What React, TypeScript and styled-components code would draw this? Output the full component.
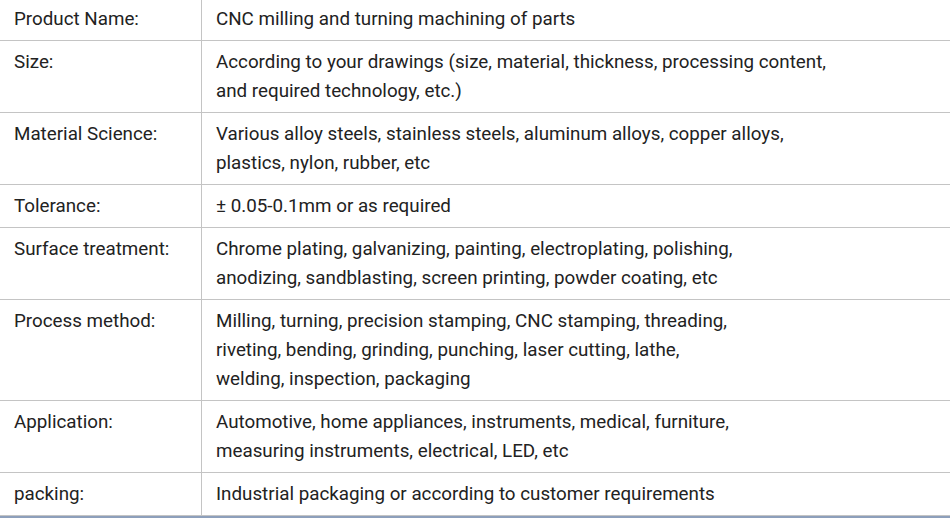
import React from 'react';
import styled, { createGlobalStyle } from 'styled-components';

const GlobalStyle = createGlobalStyle`
  html, body {
    margin: 0;
    padding: 0;
    background: #fff;
    overflow: hidden;
  }
`;

const Frame = styled.div`
  width: 950px;
  height: 518px;
  overflow: hidden;
  background: #8d9fbb;
`;

const Table = styled.table`
  border-collapse: collapse;
  width: 990px;
  margin-top: -3px;
  table-layout: fixed;
  background: #fff;
  font-family: Roboto, "Liberation Sans", Arial, sans-serif;
  font-size: 18.8px;
  line-height: 29px;
  color: #222;
`;

const Row = styled.tr`
  border-top: 1px solid #c4c4c4;
  border-bottom: 1px solid #c4c4c4;
`;

const Cell = styled.td<{ $label?: boolean }>`
  width: ${({ $label }) => ($label ? '173px' : 'auto')};
  padding: 7px 14px 6px 14px;
  vertical-align: top;
  white-space: nowrap;
  border-left: ${({ $label }) => ($label ? 'none' : '1px solid #c4c4c4')};
`;

const rows: { label: string; lines: string[] }[] = [
  { label: 'Product Name:', lines: ['CNC milling and turning machining of parts'] },
  {
    label: 'Size:',
    lines: [
      'According to your drawings (size, material, thickness, processing content,',
      'and required technology, etc.)',
    ],
  },
  {
    label: 'Material Science:',
    lines: [
      'Various alloy steels, stainless steels, aluminum alloys, copper alloys,',
      'plastics, nylon, rubber, etc',
    ],
  },
  { label: 'Tolerance:', lines: ['± 0.05-0.1mm or as required'] },
  {
    label: 'Surface treatment:',
    lines: [
      'Chrome plating, galvanizing, painting, electroplating, polishing,',
      'anodizing, sandblasting, screen printing, powder coating, etc',
    ],
  },
  {
    label: 'Process method:',
    lines: [
      'Milling, turning, precision stamping, CNC stamping, threading,',
      'riveting, bending, grinding, punching, laser cutting, lathe,',
      'welding, inspection, packaging',
    ],
  },
  {
    label: 'Application:',
    lines: [
      'Automotive, home appliances, instruments, medical, furniture,',
      'measuring instruments, electrical, LED, etc',
    ],
  },
  { label: 'packing:', lines: ['Industrial packaging or according to customer requirements'] },
];

const App: React.FC = () => {
  return (
    <>
      <GlobalStyle />
      <Frame>
        <Table>
          <tbody>
            {rows.map((r) => (
              <Row key={r.label}>
                <Cell $label>{r.label}</Cell>
                <Cell>
                  {r.lines.map((l, i) => (
                    <React.Fragment key={i}>
                      {i > 0 && <br />}
                      {l}
                    </React.Fragment>
                  ))}
                </Cell>
              </Row>
            ))}
          </tbody>
        </Table>
      </Frame>
    </>
  );
};

export default App;
